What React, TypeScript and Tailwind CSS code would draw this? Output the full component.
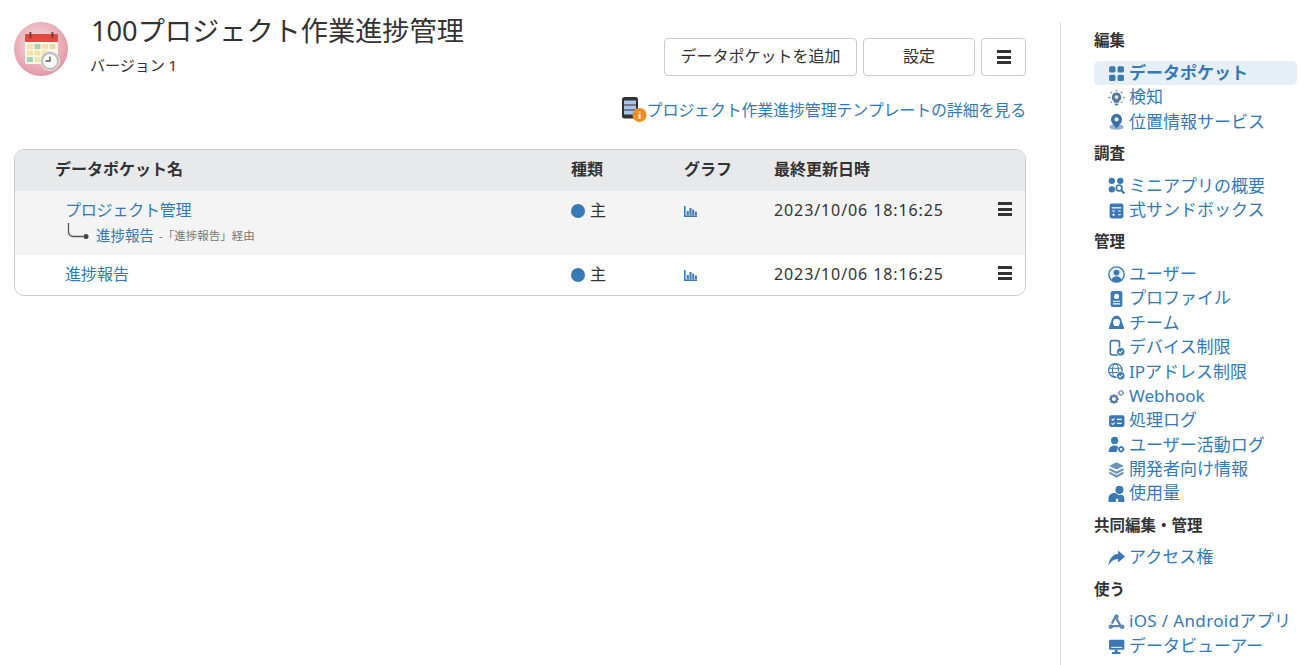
import type { ReactNode } from "react";

const BLUE = "#3c79b4";

function Ic({ children }: { children: ReactNode }) {
  return (
    <svg viewBox="0 0 16 16" fill={BLUE} className="w-[17px] h-[17px] shrink-0">
      {children}
    </svg>
  );
}

function Badge() {
  return (
    <>
      <circle cx="12" cy="12" r="4" fill={BLUE} stroke="#fff" strokeWidth="0.8" />
      <path d="M10.2 12l1.3 1.3 2.2-2.4" stroke="#fff" strokeWidth="1" fill="none" />
    </>
  );
}

const icons: Record<string, ReactNode> = {
  grid: (
    <>
      <rect x="1" y="2" width="6" height="6" rx="1.5" />
      <rect x="9" y="2" width="6" height="6" rx="1.5" />
      <rect x="1" y="10" width="6" height="6" rx="1.5" />
      <rect x="9" y="10" width="6" height="6" rx="1.5" />
    </>
  ),
  bulb: (
    <>
      <path d="M8 3.4a4.4 4.4 0 0 0-2.5 8V13h5v-1.6A4.4 4.4 0 0 0 8 3.4z" fill="#55799f" />
      <rect x="6.2" y="13.6" width="3.6" height="1.8" rx="0.9" fill="#55799f" />
      <path d="M8 .6v2M2.4 2.6l1.4 1.4M13.6 2.6l-1.4 1.4M.2 8h2M13.8 8h2M2.4 13l1.4-1.2M13.6 13l-1.4-1.2" stroke="#8a9bad" strokeWidth="1.3" fill="none" />
      <circle cx="8" cy="7.6" r="1.8" fill="#dbe6f0" />
    </>
  ),
  pin: (
    <>
      <ellipse cx="8" cy="13.2" rx="6.8" ry="2.6" fill="#8fb0d0" />
      <path d="M8 .8a5.2 5.2 0 0 0-5.2 5.2c0 3.4 5.2 8.4 5.2 8.4s5.2-5 5.2-8.4A5.2 5.2 0 0 0 8 .8z" fill="#3a70a6" />
      <circle cx="8" cy="6" r="1.9" fill="#fff" />
    </>
  ),
  mini: (
    <>
      <circle cx="3.6" cy="3.6" r="3" />
      <circle cx="11.6" cy="3.6" r="3" />
      <circle cx="3.6" cy="11.6" r="3" />
      <circle cx="10.4" cy="10.4" r="2.7" fill="none" stroke={BLUE} strokeWidth="1.7" />
      <path d="M12.5 12.5L15.5 15.5" stroke={BLUE} strokeWidth="2" />
    </>
  ),
  calc: (
    <>
      <rect x="1.5" y="1.5" width="13" height="14" rx="2" />
      <path d="M3.5 5.5h9" stroke="#fff" strokeWidth="1.2" />
      <path d="M4 8.5h2.5M9.5 8.5H12M4 12h2.5M9.5 12H12M5.2 10.8v2.4" stroke="#fff" strokeWidth="1" />
    </>
  ),
  user: (
    <>
      <circle cx="8" cy="8" r="7.2" fill="#e7eff7" stroke={BLUE} strokeWidth="1.3" />
      <circle cx="8" cy="6.2" r="2.7" />
      <path d="M3.4 13.2C4 10.6 6 9.6 8 9.6s4 1 4.6 3.6A7 7 0 0 1 8 15a7 7 0 0 1-4.6-1.8z" />
    </>
  ),
  profile: (
    <>
      <rect x="2.5" y="1" width="11" height="15" rx="2" />
      <circle cx="8" cy="6" r="2.4" fill="#fff" />
      <path d="M4.6 10.6h6.8M4.6 13h6.8" stroke="#fff" strokeWidth="1.1" />
    </>
  ),
  team: (
    <path fillRule="evenodd" d="M8 1.6c2.8 0 4.6 2.4 5 5.6l2.2 5.8c.2.6-.1 1.2-.8 1.2H1.6c-.7 0-1-.6-.8-1.2L3 7.2C3.4 4 5.2 1.6 8 1.6zm0 2.8a3.2 3.2 0 0 0-3.2 3.2c0 1.3.5 2.6 1.2 3.6h4c.7-1 1.2-2.3 1.2-3.6A3.2 3.2 0 0 0 8 4.4z" />
  ),
  device: (
    <>
      <rect x="2.2" y="1.5" width="8.6" height="13.5" rx="1.8" fill="none" stroke={BLUE} strokeWidth="1.5" />
      <Badge />
    </>
  ),
  globe: (
    <>
      <circle cx="7" cy="7" r="6.4" fill="none" stroke={BLUE} strokeWidth="1.2" />
      <ellipse cx="7" cy="7" rx="2.8" ry="6.4" fill="none" stroke={BLUE} strokeWidth="1" />
      <path d="M1 5h12M1 9h12" stroke={BLUE} strokeWidth="1" />
      <Badge />
    </>
  ),
  gears: (
    <>
      <circle cx="5.6" cy="10.4" r="2.9" fill="none" stroke="#4f7ca8" strokeWidth="2" />
      <path d="M5.6 5.9v1.6M5.6 13.3v1.6M1.1 10.4h1.6M8.5 10.4h1.6M2.4 7.2l1.1 1.1M7.7 12.5l1.1 1.1M8.8 7.2l-1.1 1.1M3.5 12.5l-1.1 1.1" stroke="#4f7ca8" strokeWidth="1.4" />
      <circle cx="12.2" cy="4.6" r="1.9" fill="none" stroke="#7d9cbc" strokeWidth="1.4" />
      <path d="M12.2 1.6v1M12.2 6.6v1M9.2 4.6h1M14.2 4.6h1" stroke="#7d9cbc" strokeWidth="1" />
    </>
  ),
  log: (
    <>
      <rect x="1" y="3" width="14.5" height="11" rx="2" />
      <path d="M3.4 6.8l1.1 1 1.7-1.8M3.4 10.8l1.1 1 1.7-1.8" stroke="#fff" strokeWidth="1" fill="none" />
      <path d="M8.4 7h4.4M8.4 10.6h4.4" stroke="#fff" strokeWidth="1.2" />
    </>
  ),
  activity: (
    <>
      <circle cx="6.2" cy="4.2" r="3.4" />
      <path d="M.6 15c0-4 2.4-6 5.6-6 1.4 0 2.6.4 3.5 1.2L8 15z" />
      <circle cx="12.4" cy="12.4" r="2" fill="none" stroke={BLUE} strokeWidth="1.6" />
      <path d="M12.4 9.2v1M12.4 14.6v1M9.2 12.4h1M14.6 12.4h1" stroke={BLUE} strokeWidth="1" />
    </>
  ),
  layers: (
    <>
      <path d="M8 1.2l7 3.4-7 3.4-7-3.4z" fill="#6d93ba" />
      <path d="M1.4 7.6L8 11l6.6-3.4M1.4 11L8 14.6 14.6 11" fill="none" stroke="#6d93ba" strokeWidth="2" />
    </>
  ),
  usage: (
    <>
      <path d="M.5 16v-3.2C.5 9.6 3 7.6 6 7.6c2.2 0 5 .6 6.4 1.4 1.8.6 3 1.8 3 3.8V16h-5.8v-3H7.4v3z" />
      <circle cx="10.8" cy="4.6" r="4.3" stroke="#fff" strokeWidth="1" />
    </>
  ),
  share: (
    <path d="M9.6 1.4L16 7l-6.4 5.6V9.6C5.4 9.6 2.6 11.4.4 16 .8 10 4 5 9.6 4.4z" />
  ),
  app: (
    <>
      <path d="M8 1.8L3.6 10M8 5.2L12.6 13.6M1.4 12.4h13.2" stroke="#5d86b0" strokeWidth="2.2" fill="none" />
      <circle cx="2.6" cy="13" r="2.1" fill="#5d86b0" />
      <circle cx="13.4" cy="13" r="2.1" fill="#5d86b0" />
      <circle cx="8" cy="3.4" r="2" fill="#5d86b0" />
    </>
  ),
  monitor: (
    <>
      <rect x="1" y="1.6" width="14.4" height="9.4" rx="1.2" />
      <path d="M3 8.8h10.4" stroke="#fff" strokeWidth="0.9" />
      <rect x="6.4" y="11" width="2.6" height="2.4" />
      <rect x="3.6" y="13.2" width="8.2" height="1.9" rx="0.6" />
    </>
  ),
};

const nav: { title: string; items: { icon: string; label: string; active?: boolean; wide?: boolean }[] }[] = [
  {
    title: "編集",
    items: [
      { icon: "grid", label: "データポケット", active: true },
      { icon: "bulb", label: "検知" },
      { icon: "pin", label: "位置情報サービス" },
    ],
  },
  {
    title: "調査",
    items: [
      { icon: "mini", label: "ミニアプリの概要" },
      { icon: "calc", label: "式サンドボックス" },
    ],
  },
  {
    title: "管理",
    items: [
      { icon: "user", label: "ユーザー" },
      { icon: "profile", label: "プロファイル" },
      { icon: "team", label: "チーム" },
      { icon: "device", label: "デバイス制限" },
      { icon: "globe", label: "IPアドレス制限" },
      { icon: "gears", label: "Webhook" },
      { icon: "log", label: "処理ログ" },
      { icon: "activity", label: "ユーザー活動ログ" },
      { icon: "layers", label: "開発者向け情報" },
      { icon: "usage", label: "使用量" },
    ],
  },
  { title: "共同編集・管理", items: [{ icon: "share", label: "アクセス権" }] },
  {
    title: "使う",
    items: [
      { icon: "app", label: "iOS / Androidアプリ", wide: true },
      { icon: "monitor", label: "データビューアー" },
    ],
  },
];

function Bars() {
  return (
    <span className="flex flex-col gap-[2.5px] w-[14px]">
      <span className="h-[3px] bg-[#333]" />
      <span className="h-[3px] bg-[#333]" />
      <span className="h-[3px] bg-[#333]" />
    </span>
  );
}

function ChartIcon() {
  return (
    <svg viewBox="0 0 13 11" fill={BLUE} className="w-[13px] h-[11px] mt-[2px]">
      <path d="M0 0h1.6v9.4H13V11H0z" />
      <rect x="2.8" y="5" width="2" height="4.4" />
      <rect x="5.5" y="2" width="2" height="7.4" />
      <rect x="8.2" y="3.6" width="2" height="5.8" />
      <rect x="10.9" y="5.6" width="2" height="3.8" />
    </svg>
  );
}

function Logo() {
  return (
    <svg viewBox="0 0 54 54" className="w-[54px] h-[54px] shrink-0 mt-2">
      <defs>
        <radialGradient id="lg" cx="45%" cy="40%" r="60%">
          <stop offset="0%" stopColor="#f7e3e6" />
          <stop offset="55%" stopColor="#eeb9c3" />
          <stop offset="100%" stopColor="#e297a6" />
        </radialGradient>
      </defs>
      <circle cx="27" cy="27" r="27" fill="url(#lg)" />
      <rect x="11" y="15" width="33" height="27" fill="#fbf6ec" />
      <rect x="11" y="12" width="33" height="8" rx="1" fill="#e2493f" />
      <rect x="15.5" y="10" width="1.8" height="6" fill="#6b3a34" />
      <rect x="37.5" y="10" width="1.8" height="6" fill="#6b3a34" />
      <g fill="#f5e3a6">
        <rect x="13" y="22" width="6" height="5" />
        <rect x="28" y="22" width="6" height="5" />
        <rect x="35.5" y="22" width="6" height="5" fill="#e8dba0" />
        <rect x="13" y="28.5" width="6" height="5" />
        <rect x="20.5" y="28.5" width="6" height="5" />
        <rect x="28" y="28.5" width="6" height="5" />
        <rect x="20.5" y="35" width="6" height="5" />
      </g>
      <g fill="#9fd8ae">
        <rect x="20.5" y="22" width="6" height="5" />
        <rect x="13" y="35" width="6" height="5" />
      </g>
      <circle cx="36" cy="39" r="9.5" fill="#bdbdbd" stroke="#e8e8e8" strokeWidth="1" />
      <circle cx="36" cy="39" r="7" fill="#f7f7f7" />
      <path d="M36 34.5V39h-4.5" stroke="#555" strokeWidth="1.3" fill="none" />
    </svg>
  );
}

function TemplateIcon() {
  return (
    <svg viewBox="0 0 26 26" className="w-[26px] h-[26px] shrink-0">
      <rect x="1" y="0" width="16" height="21.5" rx="2.5" fill="#2f3236" />
      <rect x="3" y="3.5" width="12" height="4" fill="#a9c4e4" />
      <rect x="3" y="8.5" width="12" height="4" fill="#a9c4e4" />
      <rect x="3" y="13.5" width="12" height="4" fill="#a9c4e4" />
      <circle cx="18.5" cy="18" r="7" fill="#f58a1f" />
      <rect x="17.6" y="17" width="1.9" height="5" fill="#fff" />
      <rect x="17.6" y="14" width="1.9" height="1.9" fill="#fff" />
    </svg>
  );
}

const rowCols = "grid grid-cols-[556px_113px_90px_216px_1fr]";

function Dot() {
  return (
    <span className="flex items-center gap-[5px] h-6">
      <span className="w-[14px] h-[14px] rounded-full bg-[#337ab7] mt-[1px]" />
      主
    </span>
  );
}

function RowTail() {
  return (
    <>
      <Dot />
      <span className="flex items-center h-6">
        <ChartIcon />
      </span>
      <span className="leading-6 tracking-[0.9px]">2023/10/06 18:16:25</span>
      <span className="flex items-center h-6 pl-[8px] -mt-[1px]">
        <Bars />
      </span>
    </>
  );
}

export default function App() {
  return (
    <div className="flex h-[665px] overflow-hidden bg-white text-[#333] text-[16px] font-['Noto_Sans','Noto_Sans_CJK_JP',sans-serif]">
      <main className="w-[1026px] shrink-0 pl-[14px] pt-[14px]">
        <header className="flex items-start">
          <Logo />
          <div className="ml-[23px]">
            <h1 className="text-[27.2px] leading-[34px]">100プロジェクト作業進捗管理</h1>
            <p className="-ml-[1px] mt-[6px] text-[15px] leading-[22px]">バージョン 1</p>
          </div>
          <div className="ml-auto mt-6 flex gap-[6px]">
            <button className="h-[38px] w-[193px] pb-[2px] rounded border border-[#ccc]">データポケットを追加</button>
            <button className="h-[38px] w-[112px] pb-[2px] rounded border border-[#ccc]">設定</button>
            <button className="h-[38px] w-[45px] rounded border border-[#ccc] flex items-center justify-center">
              <Bars />
            </button>
          </div>
        </header>

        <div className="mt-[22px] flex justify-end items-center h-6 text-[#337ab7] tracking-[-0.17px]">
          <TemplateIcon />
          <span>プロジェクト作業進捗管理テンプレートの詳細を見る</span>
        </div>

        <section className="mt-[27px] border border-[#ccc] rounded-[10px] overflow-hidden">
          <div className={`${rowCols} bg-[#e8e9eb] h-[41px] pb-[3px] items-center font-bold`}>
            <span className="pl-10">データポケット名</span>
            <span>種類</span>
            <span>グラフ</span>
            <span>最終更新日時</span>
          </div>
          <div className={`${rowCols} bg-[#f4f4f5] h-[64px] pt-[7px]`}>
            <div className="pl-[50px]">
              <a className="block leading-6 text-[#337ab7] tracking-[-0.2px]">プロジェクト管理</a>
              <div className="flex items-center mt-[3px] h-[22px]">
                <svg viewBox="0 0 22 18" className="w-[22px] h-[18px] ml-[2px] -mt-[9px]" fill="none">
                  <path d="M1.5 0v8c0 3.5 2 5.5 5 5.5h10" stroke="#555" strokeWidth="1.3" />
                  <circle cx="19" cy="13.5" r="2.5" fill="#444" />
                </svg>
                <a className="ml-[7px] text-[14.5px] text-[#337ab7]">進捗報告</a>
                <span className="ml-[5px] text-[11.5px] text-[#777]">-「進捗報告」経由</span>
              </div>
            </div>
            <RowTail />
          </div>
          <div className={`${rowCols} h-[40px] pt-[7px]`}>
            <a className="pl-[50px] leading-6 text-[#337ab7]">進捗報告</a>
            <RowTail />
          </div>
        </section>
      </main>

      <aside className="ml-[34px] mt-[22px] flex-1 border-l border-[#ddd] pl-[33px] pr-[11px] text-[17px] leading-[24.4px]">
        <nav className="flex flex-col gap-[6.8px] pt-[6px]">
          {nav.map((group) => (
            <div key={group.title} className="flex flex-col gap-[8.4px]">
              <h2 className="text-[15.5px] font-bold">{group.title}</h2>
              <ul>
                {group.items.map((item) => (
                  <li
                    key={item.label}
                    className={`flex items-center gap-[4px] pl-[14px] h-[24.4px] rounded-[5px] whitespace-nowrap text-[#337ab7] ${item.active ? "bg-[#e6eef6] font-bold" : ""} ${item.wide ? "tracking-[0.35px]" : ""}`}
                  >
                    <Ic>{icons[item.icon]}</Ic>
                    {item.label}
                  </li>
                ))}
              </ul>
            </div>
          ))}
        </nav>
      </aside>
    </div>
  );
}
